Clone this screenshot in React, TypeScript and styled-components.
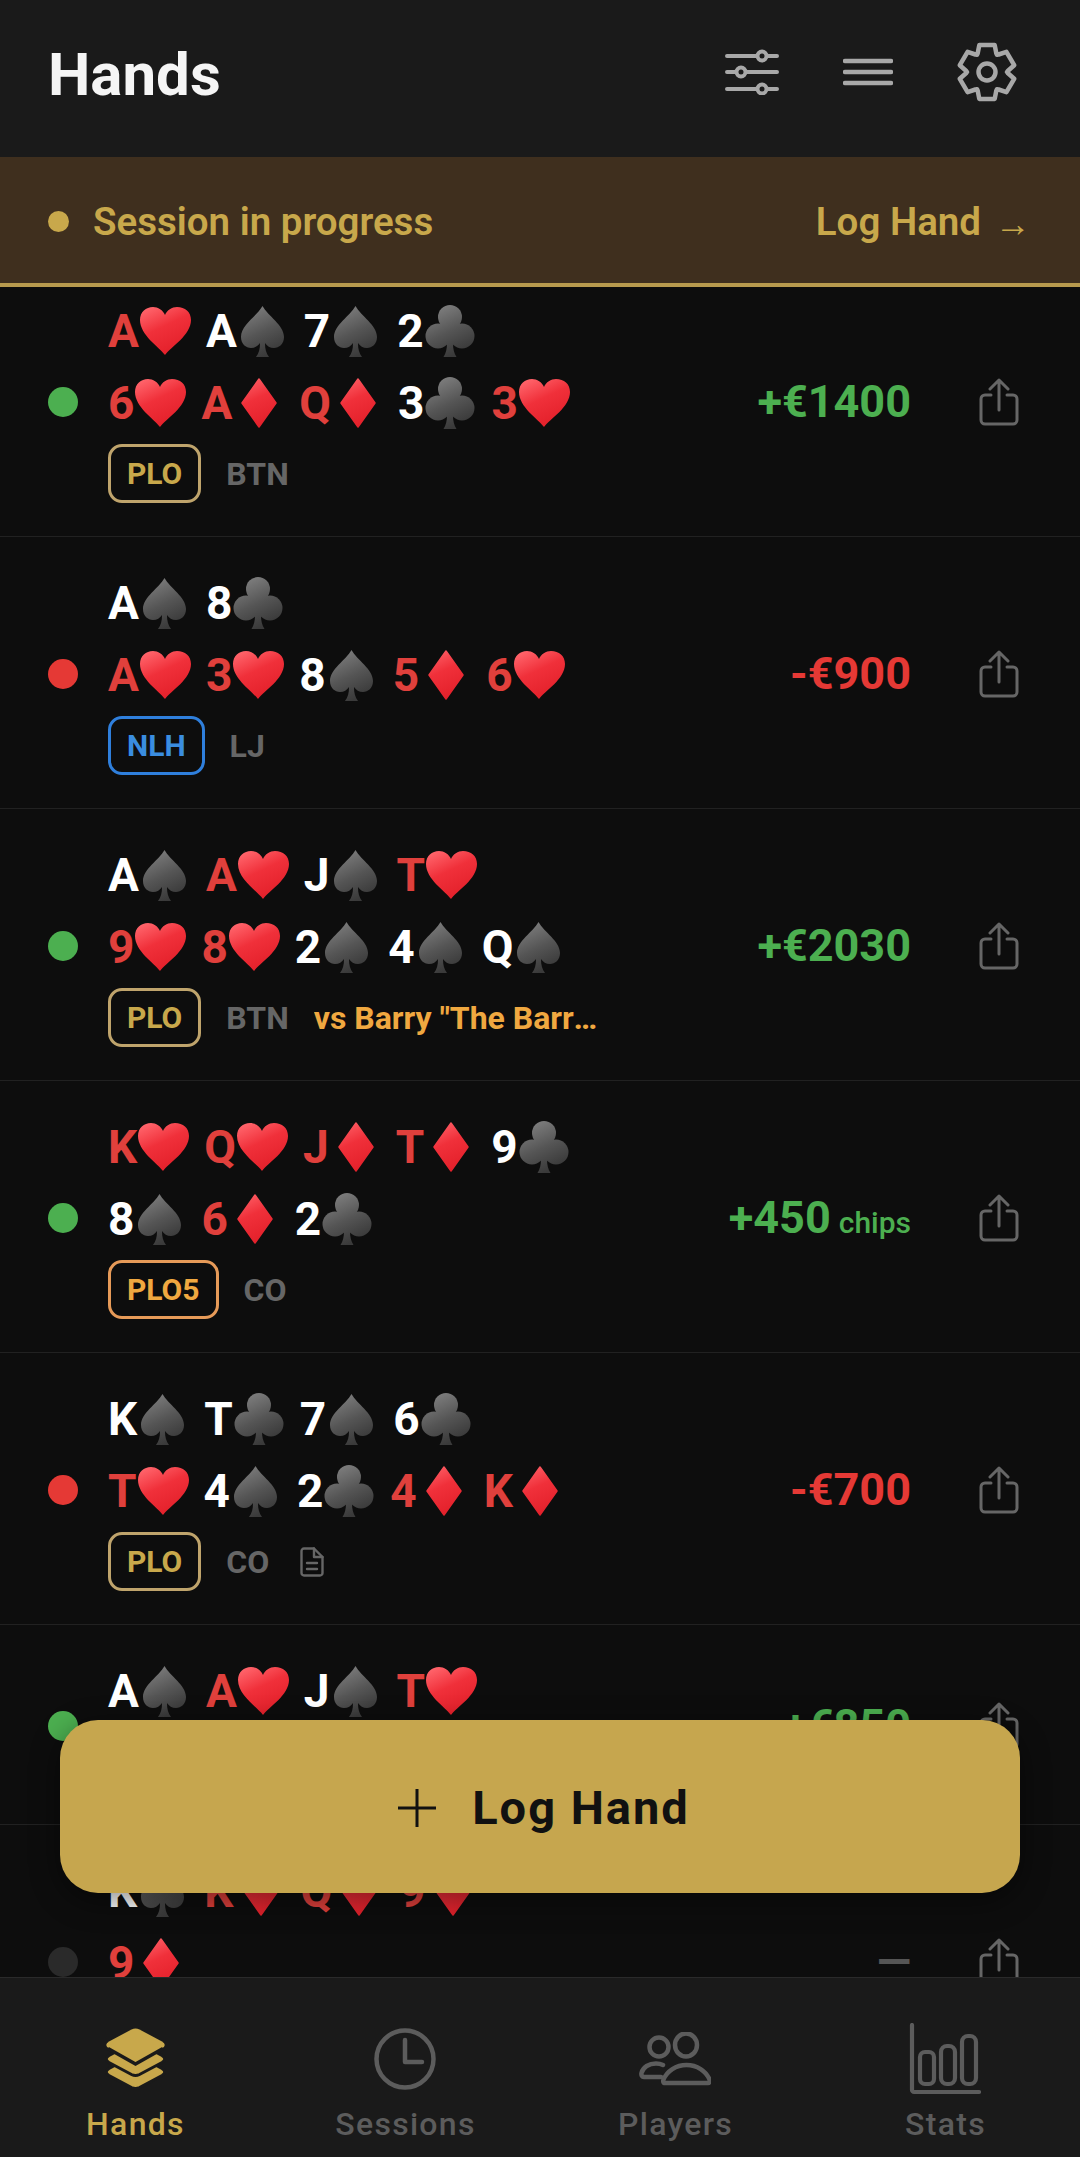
import { useId } from "react";
import styled, { createGlobalStyle } from "styled-components";

const GlobalStyle = createGlobalStyle`
  html, body {
    margin: 0;
    padding: 0;
    background: #0d0d0d;
  }
  * {
    box-sizing: border-box;
  }
`;

const Screen = styled.div`
  position: relative;
  width: 1080px;
  height: 2157px;
  display: flex;
  flex-direction: column;
  overflow: hidden;
  background: #0d0d0d;
  font-family: Roboto, "Liberation Sans", sans-serif;
`;

const Header = styled.header`
  flex: none;
  height: 157px;
  padding: 0 63px 8px 48px;
  display: flex;
  align-items: center;
  justify-content: space-between;
  background: #1a1a1a;
`;

const Title = styled.h1`
  margin: 0;
  font-size: 60px;
  font-weight: 700;
  color: #f5f5f5;
`;

const HeaderIcons = styled.div`
  display: flex;
  align-items: center;
  gap: 64px;
  margin-top: -6px;
`;

const Banner = styled.div`
  flex: none;
  height: 130px;
  padding: 2px 49px 0 48px;
  display: flex;
  align-items: center;
  justify-content: space-between;
  background: #3f2f1e;
  border-bottom: 4px solid #b89a4e;
  color: #c8a84b;
`;

const BannerLeft = styled.div`
  display: flex;
  align-items: center;
  gap: 24px;
`;

const BannerDot = styled.span`
  width: 21px;
  height: 21px;
  border-radius: 50%;
  background: #c8a84b;
`;

const BannerText = styled.span`
  font-size: 38.5px;
  font-weight: 600;
`;

const BannerLink = styled.span`
  display: flex;
  align-items: center;
  gap: 14px;
  font-size: 38.5px;
  font-weight: 600;
`;

const Arrow = styled.span`
  font-size: 36px;
  font-weight: 500;
  position: relative;
  top: 3px;
`;

const ListViewport = styled.main`
  flex: 1;
  min-height: 0;
  overflow: hidden;
`;

const Rows = styled.div`
  margin-top: -22px;
`;

const Row = styled.article`
  display: flex;
  align-items: center;
  padding: 35px 61px 33px 48px;
  border-bottom: 1px solid #212121;
`;

const ResultDot = styled.span<{ $color: string }>`
  flex: none;
  width: 30px;
  height: 30px;
  border-radius: 50%;
  margin-right: 30px;
  background: ${(p) => p.$color};
`;

const Body = styled.div`
  flex: 1;
  min-width: 0;
  padding-top: 3px;
`;

const Lines = styled.div`
  display: flex;
  flex-direction: column;
  gap: 16px;
`;

const CardLine = styled.div`
  display: flex;
  gap: 13px;
  height: 56px;
`;

const Card = styled.span`
  display: flex;
  align-items: center;
`;

const Rank = styled.span<{ $red: boolean }>`
  font-size: 46px;
  font-weight: 700;
  line-height: 56px;
  color: ${(p) => (p.$red ? "#e0403c" : "#ffffff")};
`;

const Meta = styled.div`
  display: flex;
  align-items: center;
  gap: 25px;
  margin-top: 13px;
  height: 59px;
`;

const Tag = styled.span<{ $color: string; $text: string }>`
  height: 59px;
  padding: 0 16px;
  display: flex;
  align-items: center;
  border: 3px solid ${(p) => p.$color};
  border-radius: 14px;
  font-size: 30px;
  font-weight: 700;
  color: ${(p) => p.$text};
`;

const Position = styled.span`
  font-size: 32px;
  font-weight: 700;
  color: #666666;
`;

const Opponent = styled.span`
  max-width: 290px;
  overflow: hidden;
  white-space: nowrap;
  text-overflow: ellipsis;
  font-size: 32px;
  font-weight: 700;
  color: #f0a840;
`;

const NoteMark = styled.span`
  display: flex;
  margin-left: 6px;
`;

const Amount = styled.div<{ $color: string }>`
  flex: none;
  display: flex;
  align-items: baseline;
  gap: 8px;
  margin-right: 68px;
  font-size: 45px;
  font-weight: 700;
  color: ${(p) => p.$color};
`;

const Unit = styled.span`
  font-size: 30px;
  font-weight: 500;
`;

const Fab = styled.button`
  position: absolute;
  left: 60px;
  top: 1720px;
  width: 960px;
  height: 173px;
  padding: 2px 0 0 8px;
  display: flex;
  align-items: center;
  justify-content: center;
  gap: 36px;
  border: none;
  border-radius: 38px;
  background: #c6a64e;
  box-shadow: 0 8px 30px rgba(0, 0, 0, 0.45);
  color: #111111;
  font-family: inherit;
  font-size: 47px;
  font-weight: 700;
  letter-spacing: 2px;
`;

const TabBar = styled.nav`
  flex: none;
  height: 180px;
  display: grid;
  grid-template-columns: repeat(4, 1fr);
  padding-top: 45px;
  background: #1a1a1a;
  border-top: 1px solid #2a2a2a;
`;

const Tab = styled.div<{ $active?: boolean }>`
  display: flex;
  flex-direction: column;
  align-items: center;
  color: ${(p) => (p.$active ? "#c8a84b" : "#5c5c5c")};
`;

const TabIcon = styled.div`
  height: 72px;
  display: flex;
  align-items: center;
  justify-content: center;
`;

const TabLabel = styled.span`
  margin: 10px 0 0 1px;
  font-size: 32px;
  line-height: 38px;
  font-weight: 500;
  letter-spacing: 1.3px;
`;

type SuitName = "h" | "d" | "s" | "c";

function Suit({ suit }: { suit: SuitName }) {
  const id = useId();
  const red = suit === "h" || suit === "d";
  const fill = `url(#${id})`;
  return (
    <svg width="54" height="56" viewBox="0 0 54 56">
      <defs>
        <linearGradient id={id} gradientUnits="userSpaceOnUse" x1="12" y1="4" x2="34" y2="50">
          {red ? (
            <>
              <stop offset="0" stopColor="#ff636a" />
              <stop offset="0.45" stopColor="#f0303a" />
              <stop offset="1" stopColor="#e3202a" />
            </>
          ) : (
            <>
              <stop offset="0" stopColor="#808080" />
              <stop offset="0.55" stopColor="#555555" />
              <stop offset="1" stopColor="#3a3a3a" />
            </>
          )}
        </linearGradient>
      </defs>
      {suit === "h" && (
        <path
          fill={fill}
          d="M26 52C20 44 1 32 1 17 1 9 7 4 14 4c5 0 10 3 12 8 2-5 7-8 12-8 8 0 14 5 14 13 0 15-20 27-26 35z"
        />
      )}
      {suit === "d" && (
        <path fill={fill} stroke={fill} strokeWidth="1.5" strokeLinejoin="round" d="M27 4l17 24-17 24-17-24z" />
      )}
      {suit === "s" && (
        <path
          fill={fill}
          d="M25.5 3C31 13 47 22 47 34c0 7-5 11-10 11-4 0-7-2-9-5 0 6 1 10 4 14H19c3-4 4-8 4-14-2 3-5 5-9 5-5 0-10-4-10-11C4 22 20 13 25.5 3z"
        />
      )}
      {suit === "c" && (
        <g fill={fill}>
          <circle cx="26" cy="14" r="12" />
          <circle cx="14" cy="33" r="12.5" />
          <circle cx="38" cy="33" r="12.5" />
          <path d="M22 20h8l-1 20c0 6 1 10 3.5 14h-13C22 50 23 46 23 40z" />
        </g>
      )}
    </svg>
  );
}

function ShareIcon() {
  return (
    <svg width="40" height="48" viewBox="0 0 40 48" fill="none" stroke="#666666" strokeWidth="3" strokeLinecap="round" strokeLinejoin="round">
      <path d="M12 17H6a4 4 0 0 0-4 4v21a4 4 0 0 0 4 4h28a4 4 0 0 0 4-4V21a4 4 0 0 0-4-4h-6" />
      <path d="M20 32V2M11 11l9-9 9 9" />
    </svg>
  );
}

function NoteIcon() {
  return (
    <svg width="24" height="30" viewBox="0 0 24 30" fill="none" stroke="#666666" strokeWidth="2.4" strokeLinecap="round" strokeLinejoin="round">
      <path d="M14 1.5H4A2.5 2.5 0 0 0 1.5 4v22A2.5 2.5 0 0 0 4 28.5h16a2.5 2.5 0 0 0 2.5-2.5V10z" />
      <path d="M14 1.5V10h8.5M7 16h10M7 22h10" />
    </svg>
  );
}

function SlidersIcon() {
  return (
    <svg width="54" height="46" viewBox="0 0 54 46" fill="none" stroke="#a8a8a8" strokeWidth="4" strokeLinecap="round">
      <path d="M2 7h50M2 23h50M2 40h50" />
      <g fill="#1a1a1a">
        <circle cx="37" cy="7" r="4.5" />
        <circle cx="16" cy="23" r="4.5" />
        <circle cx="37" cy="40" r="4.5" />
      </g>
    </svg>
  );
}

function MenuIcon() {
  return (
    <svg width="50" height="30" viewBox="0 0 50 30" stroke="#a8a8a8" strokeWidth="4.5" strokeLinecap="round">
      <path d="M2 4h46M2 15h46M2 26h46" />
    </svg>
  );
}

const gearPoints = Array.from({ length: 6 }, (_, i) => {
  const a = -Math.PI / 2 + (i * Math.PI) / 3;
  const at = (r: number, d: number) =>
    `${(30 + r * Math.cos(a + d)).toFixed(1)},${(30 + r * Math.sin(a + d)).toFixed(1)}`;
  return [at(21, -0.46), at(28, -0.28), at(28, 0.28), at(21, 0.46), at(20, Math.PI / 6)].join(" ");
}).join(" ");

function GearIcon() {
  return (
    <svg width="60" height="60" viewBox="0 0 60 60" fill="none" stroke="#a8a8a8" strokeWidth="4.5" strokeLinejoin="round">
      <polygon points={gearPoints} />
      <circle cx="30" cy="30" r="8.5" />
    </svg>
  );
}

function PlusIcon() {
  return (
    <svg width="38" height="38" viewBox="0 0 38 38" stroke="#111111" strokeWidth="3">
      <path d="M19 0v38M0 19h38" />
    </svg>
  );
}

function LayersIcon() {
  const diamond = (y: number) =>
    `M26.5 ${y + 1.5}Q30.5 ${y - 0.5} 34.5 ${y + 1.5}L57 ${y + 13.5}Q62.5 ${y + 17} 57 ${y + 20.5}L34.5 ${y + 32.5}Q30.5 ${y + 34.5} 26.5 ${y + 32.5}L4 ${y + 20.5}Q-1.5 ${y + 17} 4 ${y + 13.5}z`;
  return (
    <svg width="61" height="62" viewBox="0 0 61 62" fill="#c8a84b" stroke="#1a1a1a" strokeWidth="3">
      <path d={diamond(27)} />
      <path d={diamond(14)} />
      <path d={diamond(0)} strokeWidth="0" />
      <path d="M3 20.5L30.5 36 58 20.5" fill="none" strokeWidth="3.5" />
    </svg>
  );
}

function ClockIcon() {
  return (
    <svg width="62" height="62" viewBox="0 0 62 62" fill="none" stroke="currentColor" strokeWidth="4.5" strokeLinecap="round" strokeLinejoin="round">
      <circle cx="31" cy="31" r="28.5" />
      <path d="M31 12v22h17" />
    </svg>
  );
}

function PlayersIcon() {
  return (
    <svg width="72" height="54" viewBox="0 0 72 54" fill="none" stroke="currentColor" strokeWidth="4.5" strokeLinecap="round" strokeLinejoin="round">
      <circle cx="20" cy="15" r="9.5" />
      <ellipse cx="47" cy="13" rx="11" ry="11.5" />
      <path d="M26 51h43c2 0 2-2 1.5-3.5C67 39 58 33 47.5 33S28 39 24.5 47.5C24 49 24 51 26 51z" />
      <path d="M24 33c-2-1-4-1.5-7-1.5C10 31.5 4 35 2.5 41c-.5 2 .5 4 2.5 4h17" />
    </svg>
  );
}

function StatsIcon() {
  return (
    <svg width="72" height="72" viewBox="0 0 72 72" fill="none" stroke="currentColor" strokeWidth="4.2" strokeLinecap="round" strokeLinejoin="round">
      <path d="M3 2v65c0 1 1 2 2 2h65" />
      <rect x="11" y="29" width="14" height="32" rx="5" />
      <rect x="32" y="23" width="14" height="38" rx="6" />
      <rect x="53" y="13" width="14" height="48" rx="6" />
    </svg>
  );
}

function Cards({ cards }: { cards: string }) {
  return (
    <CardLine>
      {cards.split(" ").map((card, i) => {
        const suit = card[1] as SuitName;
        return (
          <Card key={i}>
            <Rank $red={suit === "h" || suit === "d"}>{card[0]}</Rank>
            <Suit suit={suit} />
          </Card>
        );
      })}
    </CardLine>
  );
}

const GREEN = "#4caf50";
const RED = "#e53935";
const TAGS: Record<string, { color: string; text: string }> = {
  PLO: { color: "#bfa46c", text: "#c8a84b" },
  NLH: { color: "#2f7fdc", text: "#3a8de0" },
  PLO5: { color: "#e69a58", text: "#f0a840" },
};

type Hand = {
  dot: string;
  hole: string;
  board: string;
  amount: string;
  unit?: string;
  amountColor: string;
  tag?: string;
  position?: string;
  opponent?: string;
  note?: boolean;
};

const hands: Hand[] = [
  { dot: GREEN, hole: "Ah As 7s 2c", board: "6h Ad Qd 3c 3h", amount: "+€1400", amountColor: GREEN, tag: "PLO", position: "BTN" },
  { dot: RED, hole: "As 8c", board: "Ah 3h 8s 5d 6h", amount: "-€900", amountColor: RED, tag: "NLH", position: "LJ" },
  { dot: GREEN, hole: "As Ah Js Th", board: "9h 8h 2s 4s Qs", amount: "+€2030", amountColor: GREEN, tag: "PLO", position: "BTN", opponent: 'vs Barry "The Barrel" Greenstein' },
  { dot: GREEN, hole: "Kh Qh Jd Td 9c", board: "8s 6d 2c", amount: "+450", unit: "chips", amountColor: GREEN, tag: "PLO5", position: "CO" },
  { dot: RED, hole: "Ks Tc 7s 6c", board: "Th 4s 2c 4d Kd", amount: "-€700", amountColor: RED, tag: "PLO", position: "CO", note: true },
  { dot: GREEN, hole: "As Ah Js Th", board: "9c 5d 2s", amount: "+€850", amountColor: GREEN },
  { dot: "#2a2a2a", hole: "Ks Kd Qd 9d", board: "9d", amount: "—", amountColor: "#555555", tag: "PLO", position: "BB" },
];

function App() {
  return (
    <Screen>
      <GlobalStyle />
      <Header>
        <Title>Hands</Title>
        <HeaderIcons>
          <SlidersIcon />
          <MenuIcon />
          <GearIcon />
        </HeaderIcons>
      </Header>
      <Banner>
        <BannerLeft>
          <BannerDot />
          <BannerText>Session in progress</BannerText>
        </BannerLeft>
        <BannerLink>
          Log Hand <Arrow>→</Arrow>
        </BannerLink>
      </Banner>
      <ListViewport>
        <Rows>
          {hands.map((hand, i) => (
            <Row key={i}>
              <ResultDot $color={hand.dot} />
              <Body>
                <Lines>
                  <Cards cards={hand.hole} />
                  <Cards cards={hand.board} />
                </Lines>
                {hand.tag && (
                  <Meta>
                    <Tag $color={TAGS[hand.tag].color} $text={TAGS[hand.tag].text}>
                      {hand.tag}
                    </Tag>
                    <Position>{hand.position}</Position>
                    {hand.opponent && <Opponent>{hand.opponent}</Opponent>}
                    {hand.note && (
                      <NoteMark>
                        <NoteIcon />
                      </NoteMark>
                    )}
                  </Meta>
                )}
              </Body>
              <Amount $color={hand.amountColor}>
                {hand.amount}
                {hand.unit && <Unit>{hand.unit}</Unit>}
              </Amount>
              <ShareIcon />
            </Row>
          ))}
        </Rows>
      </ListViewport>
      <Fab>
        <PlusIcon />
        Log Hand
      </Fab>
      <TabBar>
        <Tab $active>
          <TabIcon>
            <LayersIcon />
          </TabIcon>
          <TabLabel>Hands</TabLabel>
        </Tab>
        <Tab>
          <TabIcon>
            <ClockIcon />
          </TabIcon>
          <TabLabel>Sessions</TabLabel>
        </Tab>
        <Tab>
          <TabIcon>
            <PlayersIcon />
          </TabIcon>
          <TabLabel>Players</TabLabel>
        </Tab>
        <Tab>
          <TabIcon>
            <StatsIcon />
          </TabIcon>
          <TabLabel>Stats</TabLabel>
        </Tab>
      </TabBar>
    </Screen>
  );
}

export default App;
